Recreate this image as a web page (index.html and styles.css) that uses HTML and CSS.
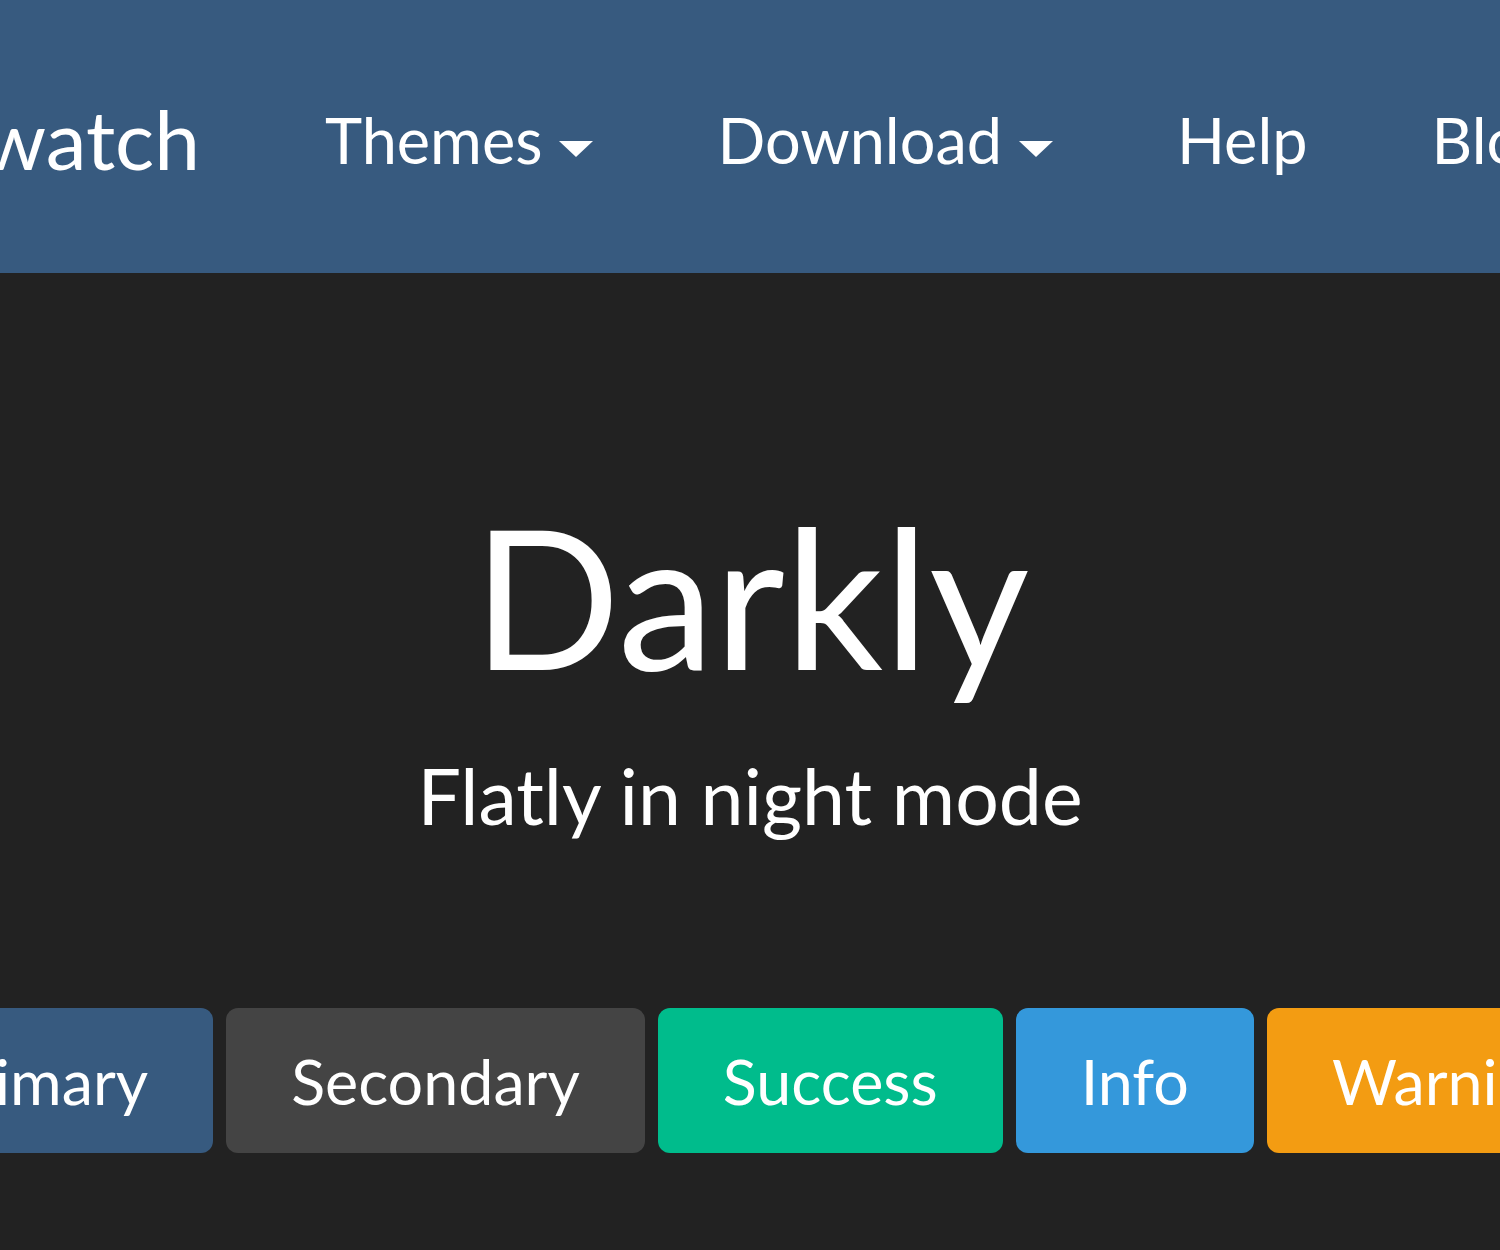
FILE: index.html
```html
<!DOCTYPE html>
<html lang="en">
<head>
    <meta charset="UTF-8">
    <meta name="viewport" content="width=device-width, initial-scale=1.0">
    <title>Darkly</title>
    <link rel="stylesheet" href="styles.css">
</head>
<body>

    <nav class="navbar">
        <div class="navbar-brand"><span>Bootswatch</span></div>
        <ul class="nav">
            <li><a class="nav-link dropdown-toggle" href="#">Themes</a></li>
            <li><a class="nav-link dropdown-toggle" href="#">Download</a></li>
            <li><a class="nav-link" href="#">Help</a></li>
            <li><a class="nav-link" href="#">Blog</a></li>
        </ul>
    </nav>

    <header class="hero">
        <h1>Darkly</h1>
        <p class="lead">Flatly in night mode</p>
    </header>

    <div class="btn-row">
        <button class="btn btn-primary">Primary</button>
        <button class="btn btn-secondary">Secondary</button>
        <button class="btn btn-success">Success</button>
        <button class="btn btn-info">Info</button>
        <button class="btn btn-warning">Warning</button>
        <button class="btn btn-danger">Danger</button>
    </div>

</body>
</html>
```

FILE: styles.css
```css
* {
    box-sizing: border-box;
    margin: 0;
    padding: 0;
}
body {
    font-family: Lato, 'Noto Sans', sans-serif;
    background-color: #222;
    color: #fff;
    overflow: hidden;
    width: 1500px;
    height: 1250px;
}
.navbar {
    height: 273px;
    background-color: #375a7f;
    display: flex;
    align-items: center;
    white-space: nowrap;
    padding-top: 6px;
}
.navbar-brand {
    flex: 0 0 200px;
    display: flex;
    justify-content: flex-end;
    overflow: hidden;
    font-size: 82px;
    margin-top: -4px;
    margin-right: 63px;
}
.nav {
    display: flex;
    list-style: none;
    flex-shrink: 0;
}
.nav-link {
    display: block;
    padding: 0 62px;
    font-size: 63px;
    color: #fff;
    text-decoration: none;
}
.dropdown-toggle::after {
    content: "";
    display: inline-block;
    margin-left: 17px;
    vertical-align: 7px;
    border-top: 16px solid #fff;
    border-left: 17px solid transparent;
    border-right: 17px solid transparent;
}
.hero {
    text-align: center;
    padding-top: 206px;
}
.hero h1 {
    font-size: 194px;
    font-weight: 400;
    line-height: 1.2;
    margin-left: 2px;
}
.lead {
    font-size: 77px;
    line-height: 1.5;
    margin-top: 26px;
}
.btn-row {
    display: flex;
    gap: 13px;
    margin-top: 155px;
    margin-left: -130px;
    white-space: nowrap;
}
.btn {
    flex-shrink: 0;
    font-family: inherit;
    font-size: 62.8px;
    line-height: 97px;
    padding: 24px 65px;
    color: #fff;
    border: none;
    border-radius: 12px;
}
.btn-primary { background-color: #375a7f; }
.btn-secondary { background-color: #444; }
.btn-success { background-color: #00bc8c; }
.btn-info { background-color: #3498db; }
.btn-warning { background-color: #f39c12; }
.btn-danger { background-color: #e74c3c; }
```
